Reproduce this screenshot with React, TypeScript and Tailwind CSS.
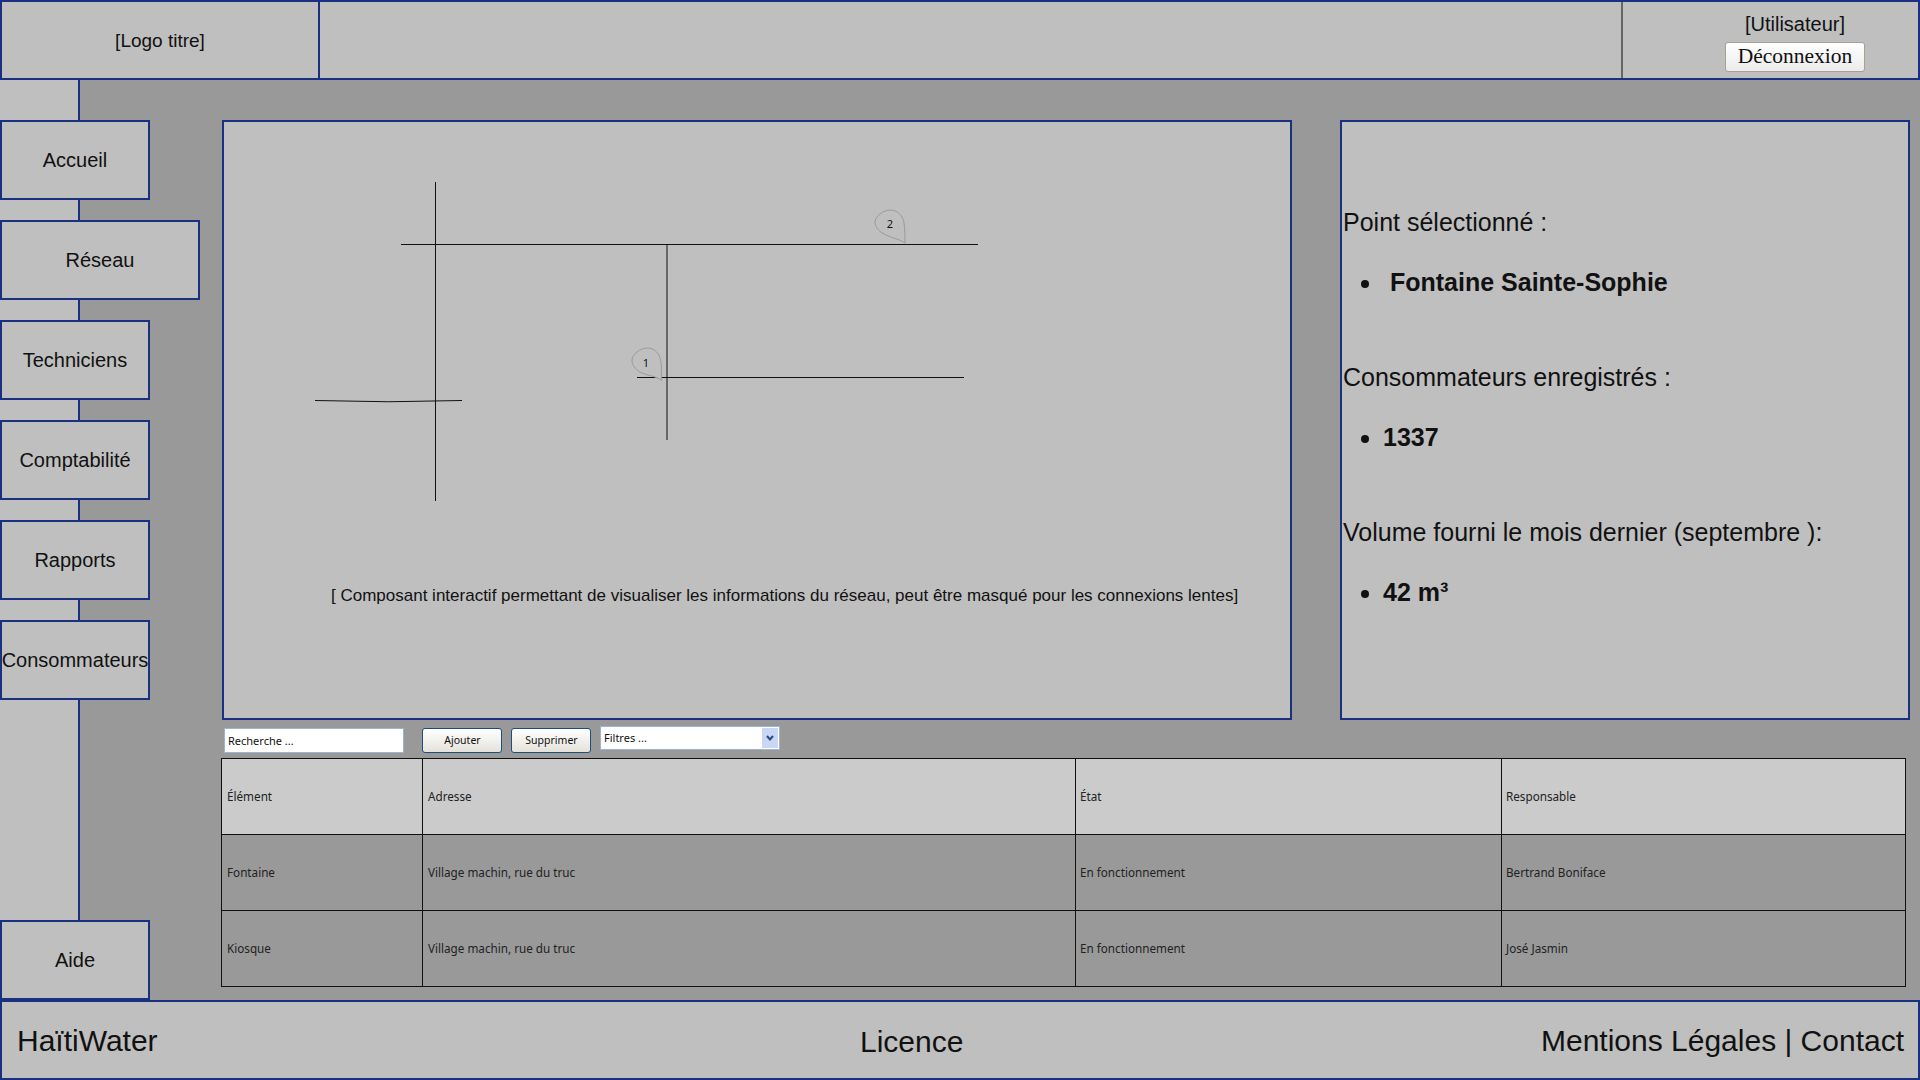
const navItems = [
  { label: 'Accueil', width: 'w-[150px]' },
  { label: 'Réseau', width: 'w-[200px]' },
  { label: 'Techniciens', width: 'w-[150px]' },
  { label: 'Comptabilité', width: 'w-[150px]' },
  { label: 'Rapports', width: 'w-[150px]' },
  { label: 'Consommateurs', width: 'w-[150px]' },
];

const rows = [
  ['Fontaine', 'Village machin, rue du truc', 'En fonctionnement', 'Bertrand Boniface'],
  ['Kiosque', 'Village machin, rue du truc', 'En fonctionnement', 'José Jasmin'],
];

function NavButton({ label, width }: { label: string; width: string }) {
  return (
    <div className={`${width} h-20 shrink-0 flex items-center justify-center border-2 border-[#1a3080] bg-[#bfbfbf] text-xl whitespace-nowrap`}>
      {label}
    </div>
  );
}

function NetworkMap() {
  return (
    <svg width="1066" height="462" className="block" fill="none">
      <g stroke="#111" strokeWidth="1">
        <path d="M211.5 60V379" />
        <path d="M177 122.5H754" />
        <path d="M443 123V318" />
        <path d="M413 255.5H740" />
        <path d="M91 278.5Q165 281 238 278.5" />
      </g>
      <g stroke="#9a9a9a" fill="#bfbfbf">
        <path d="M681 121C676 117 667 116 660 112C654 109 651 104 651 100C651 94 660 88 666 88C674 88 679 94 680 101C681 108 681 115 681 121Z" />
        <path d="M437.5 258.5C433 254 423 254 416 250C411 247 408 243 408 238C408 232 417 226 423 226C431 226 436 232 437 240C438 247 437 253 437.5 258.5Z" />
      </g>
      <text x="666" y="106" fontSize="11" fill="#111" textAnchor="middle" fontFamily="'Noto Sans', sans-serif">2</text>
      <text x="422" y="245" fontSize="11" fill="#111" textAnchor="middle" fontFamily="'Noto Sans', sans-serif">1</text>
    </svg>
  );
}

export default function App() {
  return (
    <div className="w-[1920px] h-[1080px] overflow-hidden flex flex-col bg-[#999999] text-[#111] font-['Liberation_Sans',Arial,sans-serif]">
      <header className="h-20 flex border-2 border-[#1a3080] bg-[#bfbfbf]">
        <div className="w-[318px] border-r-2 border-[#1a3080] flex items-center justify-center text-[19px] pt-[2px]">[Logo titre]</div>
        <div className="flex-1" />
        <div className="w-[297px] border-l-2 border-[#666] flex flex-col items-center pt-[8px] pl-[49px] text-xl leading-[28px]">
          <span>[Utilisateur]</span>
          <button className="w-[140px] h-[30px] mt-[4px] rounded-[3px] border border-[#a89f95] bg-gradient-to-b from-white to-[#ececec] font-['Liberation_Serif',serif] text-[21.5px] leading-none">
            Déconnexion
          </button>
        </div>
      </header>

      <div className="h-[920px] flex">
        <nav className="w-20 shrink-0 flex flex-col gap-5 pt-10 border-r-2 border-[#1a3080] bg-[#bfbfbf]">
          {navItems.map((item) => (
            <NavButton key={item.label} {...item} />
          ))}
          <div className="mt-auto">
            <NavButton label="Aide" width="w-[150px]" />
          </div>
        </nav>

        <main className="flex-1 pl-[142px] pr-[10px] pt-10">
          <div className="flex justify-between">
            <section className="w-[1070px] h-[600px] border-2 border-[#1a3080] bg-[#bfbfbf]">
              <NetworkMap />
              <p className="pl-[107px] text-[17px] leading-6 whitespace-nowrap">[ Composant interactif permettant de visualiser les informations du réseau, peut être masqué pour les connexions lentes]</p>
            </section>
            <section className="w-[570px] h-[600px] border-2 border-[#1a3080] bg-[#bfbfbf] text-[25px] leading-[30px] pt-[85px] pl-[1px]">
              <p>Point sélectionné :</p>
              <ul className="list-disc pl-[40px] mt-[30px] font-bold"><li>&nbsp;Fontaine Sainte-Sophie</li></ul>
              <p className="mt-[65px]">Consommateurs enregistrés :</p>
              <ul className="list-disc pl-[40px] mt-[30px] font-bold"><li>1337</li></ul>
              <p className="mt-[65px]">Volume fourni le mois dernier (septembre ):</p>
              <ul className="list-disc pl-[40px] mt-[30px] font-bold"><li>42 m³</li></ul>
            </section>
          </div>

          <div className="flex items-start h-[38px] pt-[8px] pl-[2px] text-[11px] font-['Noto_Sans',sans-serif]">
            <div className="w-[180px] h-[25px] bg-white border border-[#9db4d0] flex items-center pl-[3px] pt-[1px]">Recherche ...</div>
            <button className="w-[80px] h-[25px] ml-[18px] pl-[1px] pt-[1px] rounded-[3px] border border-[#1c4f80] bg-gradient-to-b from-white to-[#e4e2da] text-[10.5px]">Ajouter</button>
            <button className="w-[80px] h-[25px] ml-[9px] pl-[1px] pt-[1px] rounded-[3px] border border-[#1c4f80] bg-gradient-to-b from-white to-[#e4e2da] text-[10.5px]">Supprimer</button>
            <div className="w-[180px] h-[24px] ml-[9px] -mt-[2px] bg-white border border-[#9db4d0] flex items-center justify-between pl-[3px] pr-[1px]">
              Filtres ...
              <span className="w-[16px] h-[20px] bg-[#c9d7f5] flex items-center justify-center">
                <svg width="10" height="8" viewBox="0 0 10 8" fill="none"><path d="M2 2L5 5.5L8 2" stroke="#2b4a80" strokeWidth="2" /></svg>
              </span>
            </div>
          </div>

          <table className="w-[1685px] -ml-[1px] table-fixed border-collapse text-[11.7px] font-['Noto_Sans',sans-serif] text-[#222]">
            <colgroup>
              <col className="w-[201px]" />
              <col className="w-[653px]" />
              <col className="w-[426px]" />
              <col />
            </colgroup>
            <thead>
              <tr className="bg-[#cbcbcb] h-[76px]">
                {['Élément', 'Adresse', 'État', 'Responsable'].map((h, i) => (
                  <th key={h} className={`border border-[#111] text-left font-normal ${i < 2 ? 'pl-[5px]' : 'pl-[4px]'}`}>{h}</th>
                ))}
              </tr>
            </thead>
            <tbody>
              {rows.map((row) => (
                <tr key={row[0]} className="h-[76px]">
                  {row.map((cell, i) => (
                    <td key={i} className={`border border-[#111] ${i < 2 ? 'pl-[5px]' : 'pl-[4px]'}`}>{cell}</td>
                  ))}
                </tr>
              ))}
            </tbody>
          </table>
        </main>
      </div>

      <footer className="h-20 flex items-center border-2 border-[#1a3080] bg-[#bfbfbf] text-[30px] pl-[15px] pr-[14px]">
        <span className="w-[843px]">HaïtiWater</span>
        <span className="pt-[2px]">Licence</span>
        <span className="ml-auto">Mentions Légales | Contact</span>
      </footer>
    </div>
  );
}
